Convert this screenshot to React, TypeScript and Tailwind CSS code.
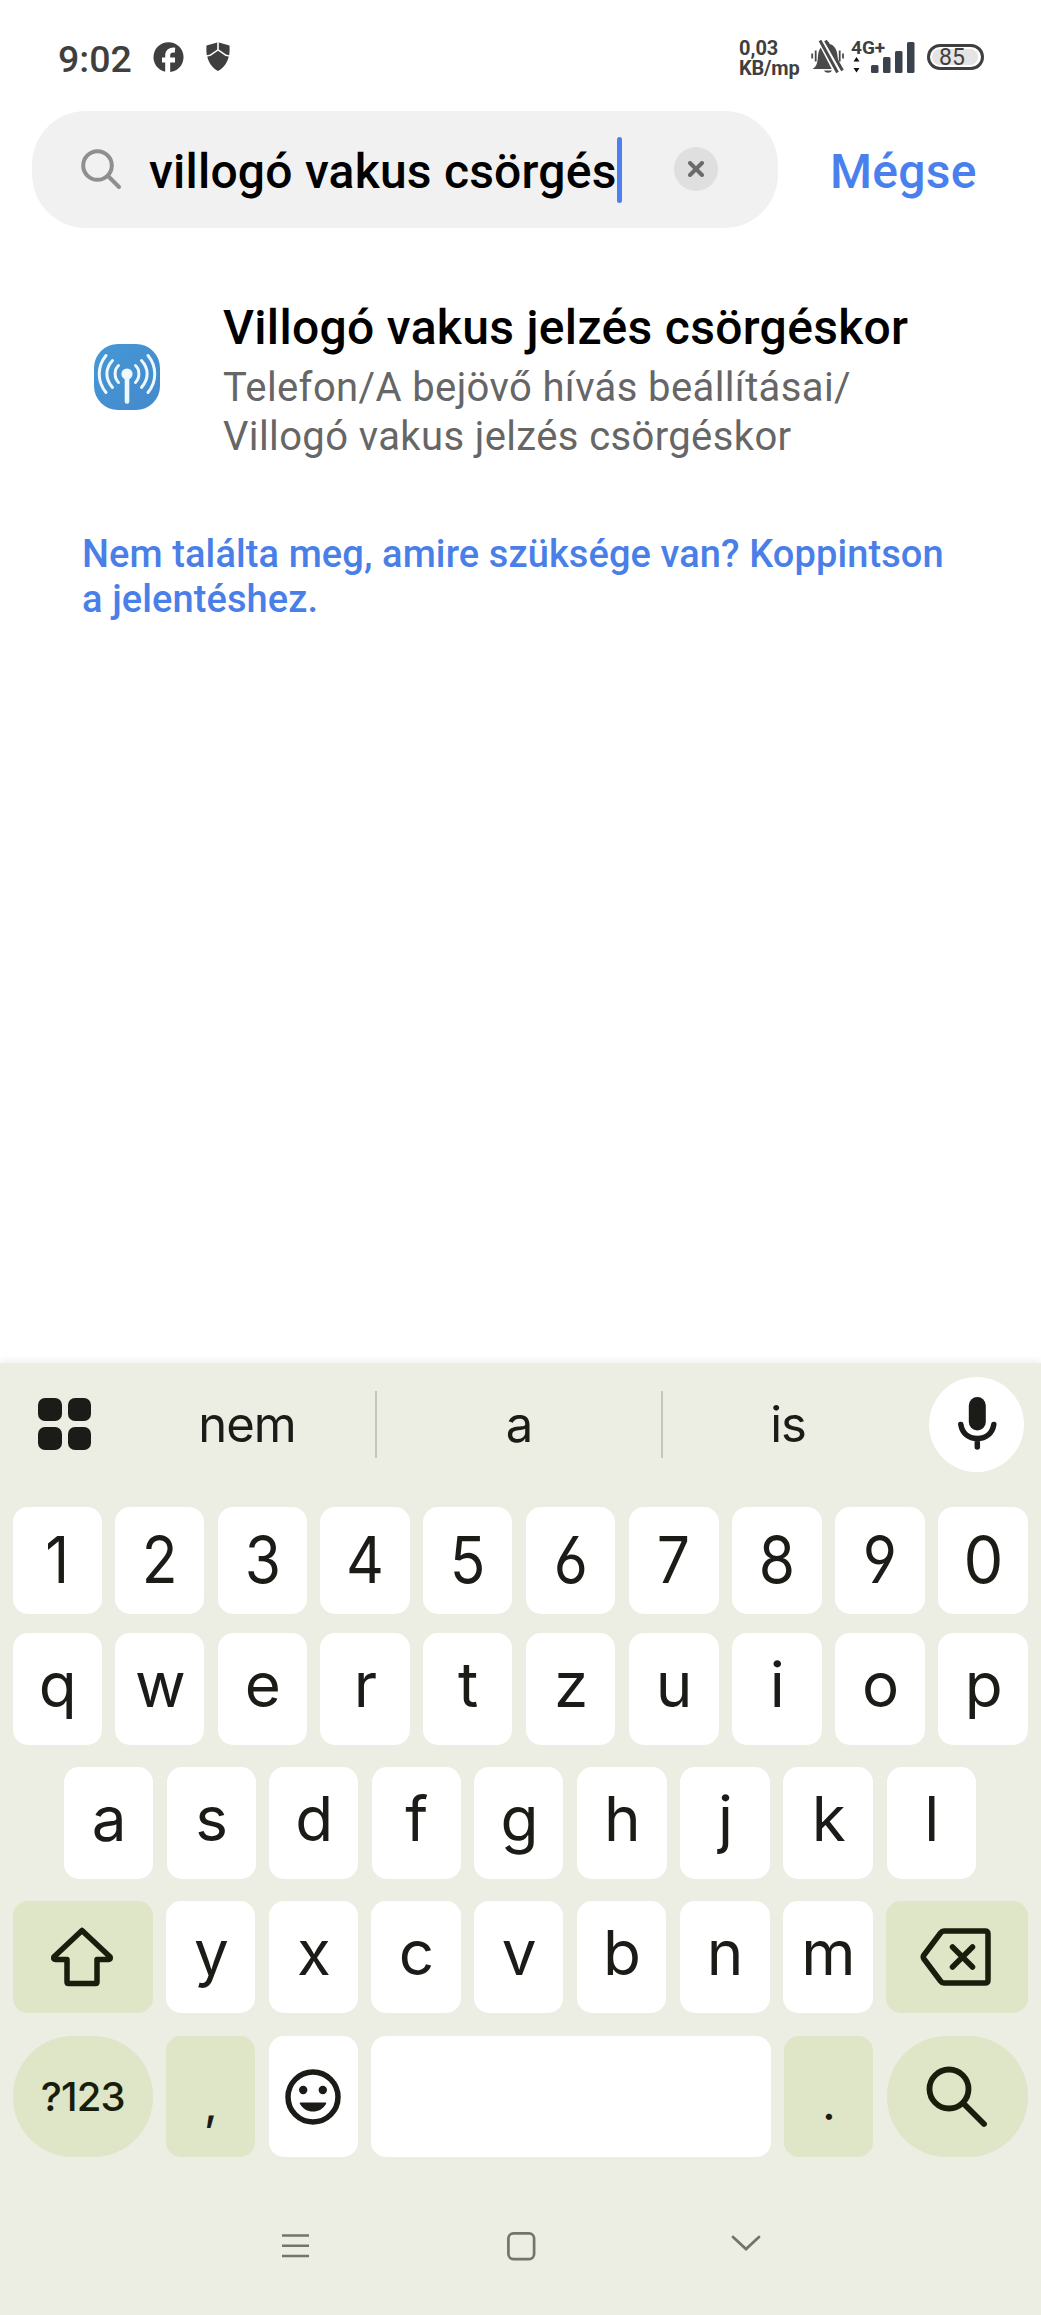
import type { ReactNode } from "react";

const INK = "#1b1c17";

function Key({ children, className = "" }: { children?: ReactNode; className?: string }) {
  return (
    <button className={`flex items-center justify-center rounded-[15px] ${className}`}>
      {children}
    </button>
  );
}

function Letter({ children }: { children: string }) {
  return (
    <Key className="bg-white">
      <span className="pb-[9px] pl-px text-[62px] leading-none">{children}</span>
    </Key>
  );
}

function FacebookIcon() {
  return (
    <svg width="31" height="31" viewBox="0 0 31 31" fill="none">
      <circle cx="15.500" cy="15.200" r="15" fill="#3f3f3f" />
      <path d="M14.700 31V13.500c0-4 2.200-5.800 7.300-5.300M9 18h13" stroke="#fff" strokeWidth="5" />
    </svg>
  );
}

function ShieldIcon() {
  return (
    <svg width="24" height="30" viewBox="0 0 24 30" fill="#3f3f3f">
      <path d="M.5 3.500 11.200.5v7L4 12.600.8 13.200C.3 10 .3 7 .5 3.500Z" />
      <path d="M23.500 3.500 12.800.5v7L20 12.600l3.200.6c.5-3.200.5-6.200.3-9.700Z" />
      <path d="M12 8.800l7.500 5.200 3.200.6C21.500 20.500 18 26 12 29 6 26 2.500 20.500 1.300 14.600l3.200-.6L12 8.800Z" />
    </svg>
  );
}

function BellOffIcon() {
  return (
    <svg width="33" height="34" viewBox="0 0 33 34" fill="none">
      <path
        d="M1.500 29c5-3 5-8 5.500-13C7.500 9 11 5 14.500 4c0-3.500 4-3.500 4 0C23 5 26 9 26.500 16c.5 5 1 10 5.500 13H1.500Z"
        fill="#4a4a4a"
      />
      <path d="M13 30.500h8c-1.500 3-6.500 3-8 0Z" fill="#4a4a4a" />
      <path d="M1.200 13.500v5M4.700 10.500v11M28.700 10.500v11M32 13.500v5" stroke="#4a4a4a" strokeWidth="1.800" />
      <path d="M10 0l17 33" stroke="#fff" strokeWidth="7.500" />
      <path d="M9 .5l17.500 32M14.500.5l17 30" stroke="#4a4a4a" strokeWidth="3" />
    </svg>
  );
}

function StatusBar() {
  return (
    <header className="flex h-[111px] items-start pl-[58px] pr-[57px] pt-[40px] text-[#3f3f3f]">
      <span className="w-[95px] text-[37.500px] font-medium leading-[39px]">9:02</span>
      <div className="mt-[2px] flex gap-[22px]">
        <FacebookIcon />
        <ShieldIcon />
      </div>
      <div className="ml-auto flex">
        <div className="mt-[-1px] w-[72px] text-[20px] font-bold leading-[19.500px]">
          <div>0,03</div>
          <div className="tracking-[-0.2px]">KB/mp</div>
        </div>
        <BellOffIcon />
        <div className="relative ml-[8px] h-[34px] w-[64px]">
          <span className="absolute left-[-1px] top-[-2px] text-[19px] font-bold leading-[20px]">4G+</span>
          <svg className="absolute left-[-1px] top-0" width="64" height="34" viewBox="0 0 64 34">
            <path d="M2.500 21.500 5.500 17l3 4.500ZM2.500 28h6l-3 4.500Z" fill="#111" />
            <g fill="#3a424d">
              <rect x="20" y="25" width="7.500" height="8" rx="1.500" />
              <rect x="32" y="17" width="7.500" height="16" rx="1.500" />
              <rect x="44" y="11" width="7.500" height="22" rx="1.500" />
              <rect x="56" y="2" width="7.500" height="31" rx="1.500" />
            </g>
          </svg>
        </div>
        <div className="ml-[11px] mt-[4px] h-[26px] w-[57px] rounded-full border-[3px] border-[#3f3f3f] p-[2px]">
          <div className="h-full w-[46px] rounded-full bg-[#e4e4e4] pl-[7px] text-[23px] leading-[17px]">85</div>
        </div>
      </div>
    </header>
  );
}

function SearchRow() {
  return (
    <div className="flex h-[117px] items-center pl-[32px]">
      <div className="flex h-full w-[746px] items-center rounded-[54px] bg-[#f1f1f1] pl-[48px]">
        <svg className="shrink-0" width="43" height="43" viewBox="0 0 43 43" fill="none" stroke="#8f8f8f" strokeWidth="4">
          <circle cx="17.500" cy="17.500" r="14.300" />
          <path d="M28 28l11 11" strokeLinecap="round" />
        </svg>
        <div className="ml-[26px] flex items-center text-[48px] font-medium leading-[60px] tracking-[0.220px] text-black">
          <span className="mt-[5px] whitespace-nowrap">villogó vakus csörgés</span>
          <span className="h-[66px] w-[5px] rounded-sm bg-[#4d7ff0]" />
        </div>
        <button className="ml-[52px] mt-[-1px] flex size-[44px] items-center justify-center rounded-full bg-[#dfdfdf]">
          <svg width="16" height="16" viewBox="0 0 16 16" stroke="#6b6b6b" strokeWidth="4" strokeLinecap="round">
            <path d="M2 2l12 12M14 2 2 14" />
          </svg>
        </button>
      </div>
      <button className="ml-[52px] mt-[5px] text-[48px] font-medium leading-[60px] tracking-[0.300px] text-[#4a80ee]">Mégse</button>
    </div>
  );
}

function AntennaIcon() {
  return (
    <svg width="66" height="66" viewBox="0 0 66 66" fill="none">
      <defs>
        <linearGradient id="antenna" x1="0" y1="0" x2="1" y2="1">
          <stop offset="0" stopColor="#4598d6" />
          <stop offset="1" stopColor="#4489cb" />
        </linearGradient>
      </defs>
      <rect width="66" height="66" rx="24" fill="url(#antenna)" />
      <circle cx="33" cy="30" r="5.600" fill="#eef8ff" />
      <path d="M33 32v25.500" stroke="#eef8ff" strokeWidth="4.600" strokeLinecap="round" />
      <g stroke="#eef8ff" strokeWidth="3" strokeLinecap="round">
        <path d="M24.500 21.500c-4.500 4-4.500 12.500 0 17M18.500 16.500c-7.500 8-7.500 18.500 0 27M12 11.500c-9 11-9 26 0 37" />
        <path d="M41.500 21.500c4.500 4 4.500 12.500 0 17M47.500 16.500c7.500 8 7.500 18.500 0 27M54 11.500c9 11 9 26 0 37" />
      </g>
    </svg>
  );
}

function Results() {
  return (
    <main className="h-[1135px]">
      <div className="flex pl-[94px] pt-[70px]">
        <div className="mt-[46px]">
          <AntennaIcon />
        </div>
        <div className="ml-[63px]">
          <div className="pt-px text-[48px] font-medium leading-[58px] tracking-[0.320px] text-black">
            Villogó vakus jelzés csörgéskor
          </div>
          <div className="mt-[6px] text-[40px] leading-[49px] tracking-[0.380px] text-[#666]">
            Telefon/A bejövő hívás beállításai/
            <br />
            Villogó vakus jelzés csörgéskor
          </div>
        </div>
      </div>
      <a className="ml-[82px] mt-[71px] block text-[38px] font-medium leading-[45px] tracking-[0.100px] text-[#4a7fe8]">
        Nem találta meg, amire szüksége van? Koppintson
        <br />a jelentéshez.
      </a>
    </main>
  );
}

function Suggestions() {
  return (
    <div className="flex h-[122px] items-center">
      <div className="ml-[38px] grid w-[53px] grid-cols-2 gap-[6px]">
        <i className="h-[23px] rounded-[7px] bg-[#1b1c17]" />
        <i className="h-[23px] rounded-[7px] bg-[#1b1c17]" />
        <i className="h-[23px] rounded-[7px] bg-[#1b1c17]" />
        <i className="h-[23px] rounded-[7px] bg-[#1b1c17]" />
      </div>
      <div className="ml-[28px] flex h-[67px] items-center text-[49px] leading-none tracking-[-1px]">
        <span className="w-[256px] text-center">nem</span>
        <i className="h-full w-[2px] bg-[#c4c5bb]" />
        <span className="w-[284px] text-center">a</span>
        <i className="h-full w-[2px] bg-[#c4c5bb]" />
        <span className="w-[250px] text-center">is</span>
      </div>
      <button className="ml-auto mr-[17px] flex size-[95px] items-center justify-center rounded-full bg-white">
        <svg width="40" height="54" viewBox="0 0 40 54" fill="none" stroke={INK} strokeWidth="5.500" strokeLinecap="round">
          <rect x="11.800" y="0" width="17" height="33.500" rx="8.500" fill={INK} stroke="none" />
          <path d="M3.800 27.500c1.500 9 8 14 16.500 14s15-5 16.500-14M20.300 42v8" />
        </svg>
      </button>
    </div>
  );
}

function Keyboard() {
  return (
    <section className="h-[952px] bg-[#ecede3] font-['Inter',sans-serif] text-[#1b1c17] shadow-[0_-2px_8px_rgba(0,0,0,0.07)]">
      <Suggestions />
      <div className="mt-[22px] grid h-[107px] grid-cols-[repeat(5,89.100px)_repeat(5,89.700px)] gap-[13.500px] pl-[12.700px]">
        {[..."1234567890"].map((d) => (
          <Key key={d} className="bg-white text-[64.500px] leading-none [font-feature-settings:'cv03','cv04']">
            <span className={d === "0" ? "inline-block scale-x-[0.98]" : "inline-block scale-x-[0.91]"}>{d}</span>
          </Key>
        ))}
      </div>
      <div className="mt-[19px] grid h-[112px] grid-cols-[repeat(5,89.100px)_repeat(5,89.700px)] gap-[13.500px] pl-[12.700px]">
        {[..."qwertzuiop"].map((c) => (
          <Letter key={c}>{c}</Letter>
        ))}
      </div>
      <div className="mt-[22px] grid h-[112px] grid-cols-[repeat(5,89.100px)_repeat(4,89.700px)] gap-[13.500px] pl-[64px]">
        {[..."asdfghjkl"].map((c) => (
          <Letter key={c}>{c}</Letter>
        ))}
      </div>
      <div className="mt-[22px] grid h-[112px] grid-cols-[140.100px_repeat(4,89.100px)_repeat(3,89.700px)_141.500px] gap-[13.500px] pl-[12.700px]">
        <Key className="bg-[#dfe5c7]">
          <svg className="ml-[-2px]" width="64" height="62" viewBox="0 0 64 62" fill="none" stroke="#191d0b" strokeWidth="5.500" strokeLinejoin="round">
            <path d="M32 4.500 3.800 31q-.5 2.500 1.700 2.500H17V56q0 1.500 1.500 1.500h27Q47 57.500 47 56V33.500h11.500q2.200 0 1.700-2.500Z" />
          </svg>
        </Key>
        {[..."yxcvbnm"].map((c) => (
          <Letter key={c}>{c}</Letter>
        ))}
        <Key className="bg-[#dfe5c7]">
          <svg className="ml-[-2px]" width="72" height="58" viewBox="0 0 72 58" fill="none" stroke="#191d0b" strokeWidth="5.500" strokeLinejoin="round" strokeLinecap="round">
            <path d="M24 3h41q3 0 3 3v46q0 3-3 3H24q-2 0-3.500-2L4 31q-1.500-2 0-4L20.500 5Q22 3 24 3Z" />
            <path d="M32.500 19l20 20M52.500 19l-20 20" />
          </svg>
        </Key>
      </div>
      <div className="mt-[23px] grid h-[121px] grid-cols-[140.100px_89.100px_89.100px_399.300px_89.100px_141.400px] gap-[13.500px] pl-[12.700px]">
        <button className="rounded-[60px] bg-[#dfe5c7] text-[40px] font-medium leading-none tracking-[-0.900px] text-[#191d0b]">
          ?123
        </button>
        <Key className="bg-[#dfe5c7] pt-[14px] text-[44px] font-medium leading-none">,</Key>
        <Key className="bg-white">
          <svg width="56" height="56" viewBox="0 0 56 56" fill="none">
            <circle cx="28" cy="28" r="25" stroke={INK} strokeWidth="5.500" />
            <circle cx="18.200" cy="21" r="4.200" fill={INK} />
            <circle cx="37.800" cy="21" r="4.200" fill={INK} />
            <path d="M15.500 33.500h25c.8 0 1 .8.500 1.500-3 5-7.500 7.500-13 7.500S18 40 15 35c-.5-.7-.3-1.500.5-1.500Z" fill={INK} />
          </svg>
        </Key>
        <Key className="bg-white" />
        <Key className="bg-[#dfe5c7] pt-[14px] text-[44px] font-medium leading-none">.</Key>
        <button className="flex items-center justify-center rounded-[60px] bg-[#dfe5c7]">
          <svg className="ml-[-1px]" width="62" height="62" viewBox="0 0 62 62" fill="none" stroke="#191d0b" strokeWidth="5.800" strokeLinecap="round">
            <circle cx="23" cy="23" r="19.500" />
            <path d="M37.500 37.500 58 58" />
          </svg>
        </button>
      </div>
      <nav className="mt-[75px] flex pl-[282px]">
        <svg width="27" height="27" viewBox="0 0 27 27" stroke="#73746c" strokeWidth="2.600">
          <path d="M0 3.500h27M0 13.800h27M0 24h27" />
        </svg>
        <svg className="ml-[198px]" width="29" height="29" viewBox="0 0 29 29" fill="none" stroke="#73746c" strokeWidth="2.700">
          <rect x="1.400" y="1.400" width="25.700" height="25.700" rx="5" />
        </svg>
        <svg className="ml-[195px]" width="30" height="22" viewBox="0 0 30 22" fill="none" stroke="#73746c" strokeWidth="2.800" strokeLinecap="round">
          <path d="M2 5 15 17 28 5" />
        </svg>
      </nav>
    </section>
  );
}

export default function App() {
  return (
    <div className="h-[2315px] w-[1041px] overflow-hidden bg-white font-['Roboto',sans-serif]">
      <StatusBar />
      <SearchRow />
      <Results />
      <Keyboard />
    </div>
  );
}
